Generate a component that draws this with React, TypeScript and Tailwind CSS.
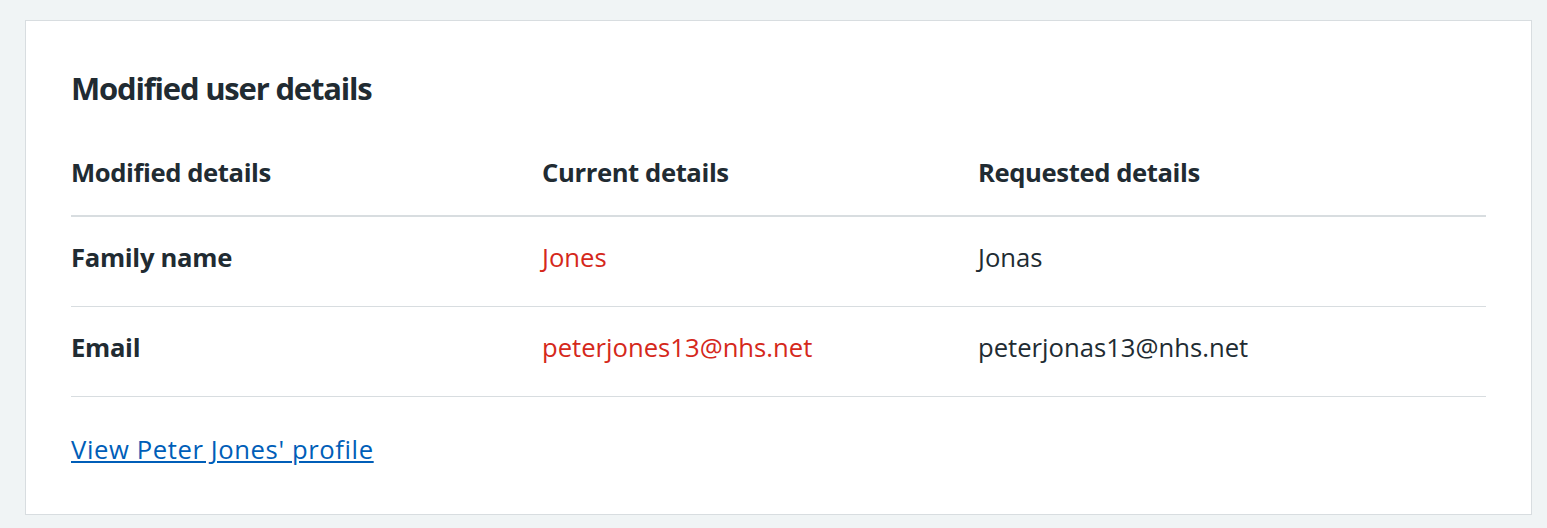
import React from "react";

const rows = [
  { label: "Family name", current: "Jones", requested: "Jonas" },
  { label: "Email", current: "peterjones13@nhs.net", requested: "peterjonas13@nhs.net" },
];

export default function App() {
  return (
    <div
      className="min-h-[528px] w-full bg-[#f0f4f5] pt-[20px] pl-[25px] text-[#212b32]"
      style={{ fontFamily: '"Open Sans", "Noto Sans", sans-serif' }}
    >
      <div className="w-[1507px] h-[495px] border border-[#d8dde0] bg-white px-[45px] pt-[47px]">
        <h2 className="text-[31px] leading-[40px] font-bold tracking-[-1.2px] mb-[23px]">Modified user details</h2>
        <div className="grid grid-cols-[471px_436px_1fr]">
          {["Modified details", "Current details", "Requested details"].map((h) => (
            <div
              key={h}
              className="pt-[23px] pb-[23px] text-[25.65px] leading-[38px] font-bold tracking-[-0.4px] border-b-2 border-[#d8dde0]"
            >
              {h}
            </div>
          ))}
          {rows.map((r) => (
            <React.Fragment key={r.label}>
              <div className="pt-[22px] pb-[29px] text-[25.65px] leading-[38px] font-bold tracking-[-0.3px] border-b border-[#d8dde0]">
                {r.label}
              </div>
              <div className="pt-[22px] pb-[29px] text-[25.65px] leading-[38px] text-[#d5281b] border-b border-[#d8dde0]">
                {r.current}
              </div>
              <div className="pt-[22px] pb-[29px] text-[25.65px] leading-[38px] border-b border-[#d8dde0]">
                {r.requested}
              </div>
            </React.Fragment>
          ))}
        </div>
        <div className="pt-[34px]">
          <a href="#" className="text-[25.65px] leading-[38px] tracking-[0.6px] text-[#005eb8] underline">
            View Peter Jones' profile
          </a>
        </div>
      </div>
    </div>
  );
}
